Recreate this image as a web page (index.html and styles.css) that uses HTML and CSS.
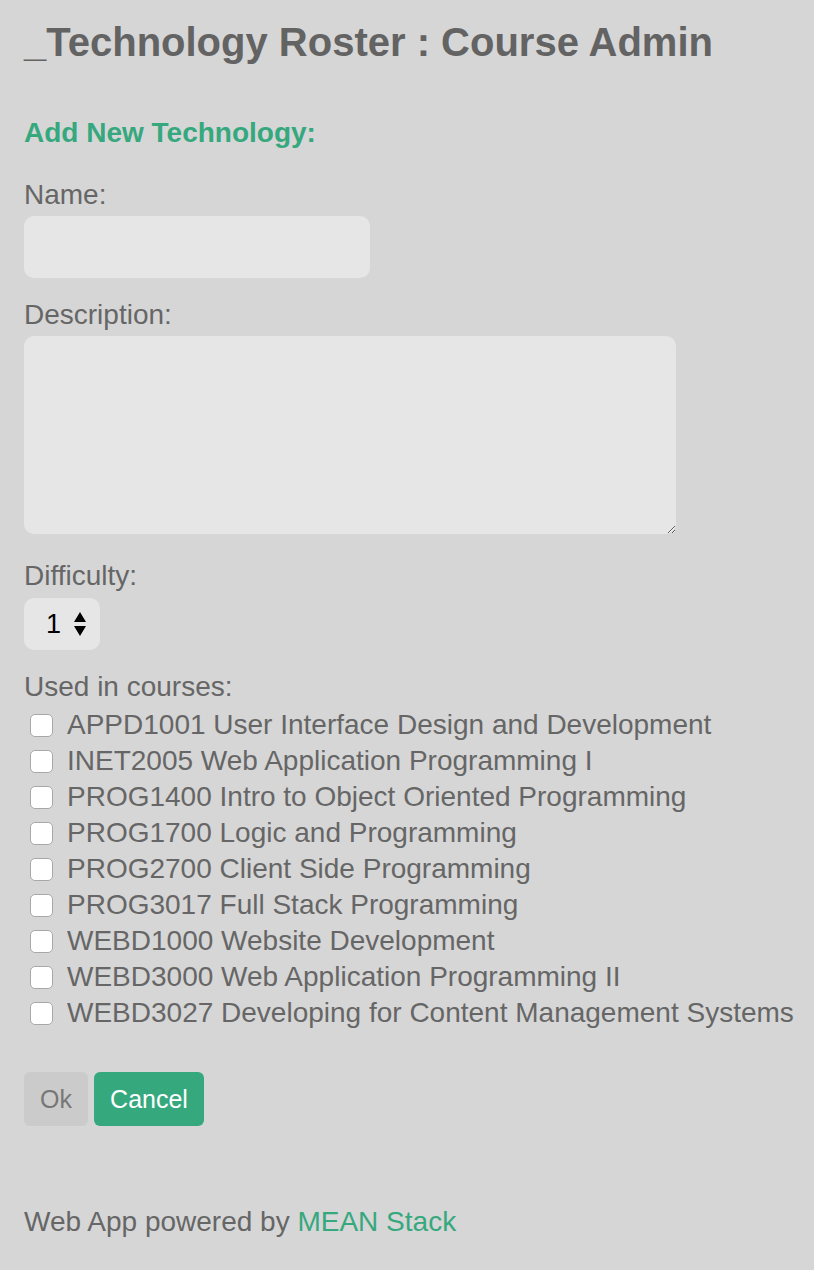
FILE: index.html
```html
<!DOCTYPE html>
<html>
<head>
<meta charset="utf-8">
<link rel="stylesheet" href="styles.css">
</head>
<body>
<h1 class="title">_Technology Roster : Course Admin</h1>
<h2 class="section">Add New Technology:</h2>
<label class="label label-first">Name:</label>
<input class="field name-field" type="text">
<label class="label">Description:</label>
<textarea class="field desc-field"></textarea>
<label class="label label-diff">Difficulty:</label>
<div class="select-wrap">
  <select class="diff-select"><option>1</option><option>2</option><option>3</option><option>4</option><option>5</option></select>
  <svg class="select-arrows" width="14" height="26" viewBox="0 0 14 26"><path d="M7 1 L13 11 H1 Z M1 15 H13 L7 25 Z" fill="#000"/></svg>
</div>
<label class="label">Used in courses:</label>
<ul class="courses">
  <li class="course"><span class="box"></span>APPD1001 User Interface Design and Development</li>
  <li class="course"><span class="box"></span>INET2005 Web Application Programming I</li>
  <li class="course"><span class="box"></span>PROG1400 Intro to Object Oriented Programming</li>
  <li class="course"><span class="box"></span>PROG1700 Logic and Programming</li>
  <li class="course"><span class="box"></span>PROG2700 Client Side Programming</li>
  <li class="course"><span class="box"></span>PROG3017 Full Stack Programming</li>
  <li class="course"><span class="box"></span>WEBD1000 Website Development</li>
  <li class="course"><span class="box"></span>WEBD3000 Web Application Programming II</li>
  <li class="course"><span class="box"></span>WEBD3027 Developing for Content Management Systems</li>
</ul>
<div class="buttons">
  <button class="btn btn-ok">Ok</button>
  <button class="btn btn-cancel">Cancel</button>
</div>
<p class="footer">Web App powered by <span class="link">MEAN Stack</span></p>
</body>
</html>
```
FILE: styles.css
```css
html, body {
  margin: 0;
  padding: 0;
  background: #d6d6d6;
}
body {
  padding: 0 24px;
  font-family: "Liberation Sans", Arial, sans-serif;
  color: #666666;
  min-height: 1270px;
  box-sizing: border-box;
  overflow: hidden;
}
.title {
  margin: 20px 0 0;
  font-size: 40px;
  line-height: 44px;
  font-weight: bold;
  color: #636363;
  white-space: nowrap;
}
.section {
  margin: 51px 0 0;
  font-size: 28px;
  line-height: 36px;
  font-weight: bold;
  color: #36a87e;
}
.label {
  display: block;
  font-size: 28px;
  line-height: 36px;
  margin-top: 19px;
  color: #666666;
}
.label-first { margin-top: 26px; }
.label-diff { margin-top: 24px; }
.field {
  display: block;
  border: none;
  outline: none;
  background: #e6e6e6;
  border-radius: 10px;
  box-sizing: border-box;
  margin: 0;
  font-family: inherit;
  font-size: 24px;
  color: #333;
}
.name-field {
  margin-top: 3px;
  width: 346px;
  height: 62px;
}
.desc-field {
  margin-top: 3px;
  width: 652px;
  height: 198px;
  resize: both;
}
.select-wrap {
  position: relative;
  margin-top: 4px;
  width: 76px;
  height: 52px;
}
.diff-select {
  appearance: none;
  -webkit-appearance: none;
  border: none;
  outline: none;
  width: 76px;
  height: 52px;
  background: #e6e6e6;
  border-radius: 10px;
  font-family: "Liberation Sans", Arial, sans-serif;
  font-size: 27px;
  color: #000;
  padding: 0 0 0 22px;
  margin: 0;
}
.select-arrows {
  position: absolute;
  left: 49px;
  top: 13px;
  pointer-events: none;
}
.courses {
  list-style: none;
  margin: 2px 0 0;
  padding: 0;
}
.course {
  display: flex;
  align-items: center;
  height: 36px;
  font-size: 28px;
  color: #666666;
  white-space: nowrap;
}
.box {
  width: 23px;
  height: 23px;
  box-sizing: border-box;
  margin: 0 14px 0 6px;
  background: #fff;
  border: 1px solid #a8a8a8;
  border-radius: 5px;
  flex: none;
}
.buttons {
  display: flex;
  gap: 6px;
  margin-top: 41px;
}
.btn {
  height: 54px;
  border: none;
  border-radius: 6px;
  font-family: "Liberation Sans", Arial, sans-serif;
  font-size: 25px;
  padding: 0;
  margin: 0;
}
.btn-ok {
  width: 64px;
  background: #cbcbcb;
  color: #777;
}
.btn-cancel {
  width: 110px;
  background: #36a87e;
  color: #fff;
}
.footer {
  margin: 78px 0 0;
  font-size: 28px;
  line-height: 36px;
  color: #666666;
}
.link { color: #36a87e; }
```
